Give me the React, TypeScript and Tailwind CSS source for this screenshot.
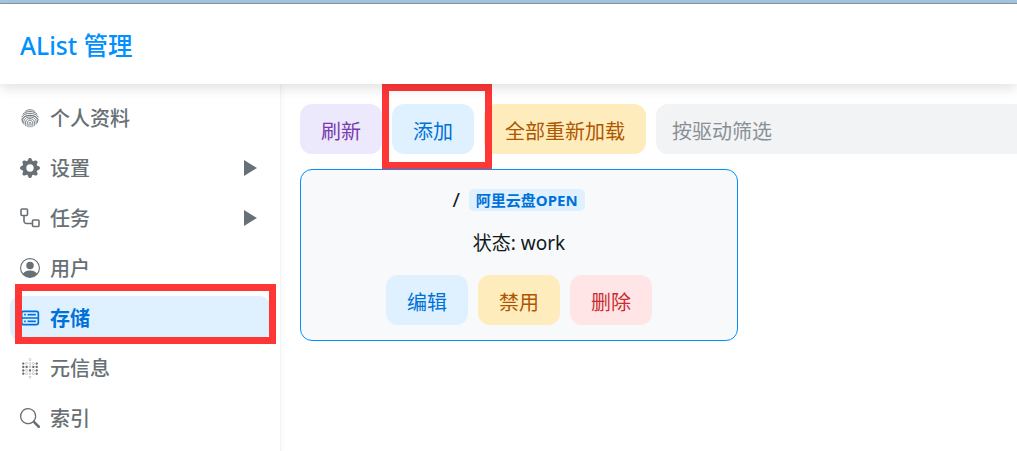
import React from 'react';
import { BsGearFill, BsPersonCircle, BsSearch } from 'react-icons/bs';
import { SiMetabase } from 'react-icons/si';
import { CgDatabase } from 'react-icons/cg';

const FingerprintIcon = () => (
  <svg width="20" height="20" viewBox="0 0 20 20" fill="none" stroke="currentColor" strokeWidth="0.9" strokeLinecap="round">
    <path d="M5.5 3.2C8.2 1.2 11.8 1.2 14.5 3.2" />
    <path d="M3 6C6 2.6 14 2.6 17 6" />
    <path d="M1.8 9C3.8 4 16.2 4 18.2 9" />
    <path d="M1.6 12C2.4 5.6 17.6 5.6 18.4 12" />
    <path d="M2.4 14.5C2 13 2.8 7.4 10 7.4C17.2 7.4 18 13 17.6 14.5" />
    <path d="M3.8 16C3.4 13 4.4 9 10 9C15.6 9 16.6 13 16.2 16" />
    <path d="M5.4 17.4C5 14 6 10.6 10 10.6C14 10.6 15 14 14.6 17.4" />
    <path d="M7.2 18.4C6.8 15 7.6 12.2 10 12.2C12.4 12.2 13.2 15 12.8 18.4" />
    <path d="M9 18.9C8.8 16.4 9 14 10 14C11 14 11.2 16.4 11 18.9" />
  </svg>
);

const TaskIcon = () => (
  <svg width="20" height="20" viewBox="0 0 20 20" fill="none" stroke="currentColor" strokeWidth="1.6">
    <rect x="1" y="1" width="6.5" height="6.5" rx="1" />
    <rect x="12.5" y="12" width="6.5" height="6.5" rx="1" />
    <path d="M4 7.5V13a2.5 2.5 0 0 0 2.5 2.5h6" />
  </svg>
);

const menu = [
  { label: '个人资料', icon: <FingerprintIcon /> },
  { label: '设置', icon: <BsGearFill size={20} />, arrow: true },
  { label: '任务', icon: <TaskIcon />, arrow: true },
  { label: '用户', icon: <BsPersonCircle size={20} /> },
  { label: '存储', icon: <CgDatabase size={22} />, active: true },
  { label: '元信息', icon: <SiMetabase size={21} /> },
  { label: '索引', icon: <BsSearch size={20} /> },
];

const Btn = ({ className, children }: { className: string; children: React.ReactNode }) => (
  <button className={`h-[50px] px-[21px] pt-[6px] rounded-[12px] text-[20px] leading-none ${className}`}>{children}</button>
);

const App: React.FC = () => {
  return (
    <div
      className="relative h-screen overflow-hidden bg-white text-[#11181c]"
      style={{ fontFamily: '"Noto Sans", "Noto Sans CJK SC", sans-serif' }}
    >
      <div className="h-[4px] bg-[#a9c4dc] border-b border-[#7f99ae]" />

      {/* Header */}
      <header className="relative z-10 h-[80px] flex items-center pl-[20px] pt-[5px] bg-white shadow-[0_4px_12px_rgba(0,0,0,0.12)]">
        <h1 className="text-[24.5px] font-medium text-[#0091ff]">AList 管理</h1>
      </header>

      <div className="flex h-[367px]">
        {/* Sidebar */}
        <aside className="w-[281px] shrink-0 pt-[12px] px-[10px] border-r border-[#f1f3f5] shadow-[1px_0_4px_rgba(0,0,0,0.04)]">
          {menu.map((item) => (
            <div
              key={item.label}
              className={`h-[44px] mb-[6px] w-[260px] flex items-center rounded-[10px] pl-[10px] pr-[13px] ${
                item.active ? 'bg-[#dff0ff] text-[#0070d9]' : 'text-[#687076]'
              }`}
            >
              <span className="w-[20px] h-[22px] flex items-center justify-center shrink-0">{item.icon}</span>
              <span className={`ml-[10px] pt-[2px] text-[20px] flex-1 ${item.active ? 'font-bold' : 'font-medium'}`}>{item.label}</span>
              {item.arrow && <span className="w-0 h-0 border-y-[8px] border-y-transparent border-l-[13px] border-l-[#687076]" />}
            </div>
          ))}
        </aside>

        {/* Main */}
        <main className="flex-1 min-w-0 pt-[20px] pl-[19px]">
          <div className="flex gap-[10px]">
            <Btn className="bg-[#ede9fd] text-[#793aaf]">刷新</Btn>
            <Btn className="bg-[#dff0ff] text-[#0070d9]">添加</Btn>
            <Btn className="bg-[#ffecbc] text-[#ad5700] whitespace-nowrap">全部重新加载</Btn>
            <div className="flex-1 h-[50px] rounded-l-[12px] bg-[#f1f3f5] pl-[16px] pt-[6px] flex items-center text-[20px] text-[#889096] whitespace-nowrap">
              按驱动筛选
            </div>
          </div>

          <div className="mt-[15px] w-[438px] h-[172px] rounded-[12px] border border-[#0091ff] bg-[#f8f9fa] flex flex-col items-center pt-[19px]">
            <div className="h-[22px] flex items-center gap-[9px] pr-[1px]">
              <span className="text-[20px] leading-none">/</span>
              <span className="h-[22px] px-[7px] rounded-[5px] bg-[#dff0ff] text-[#0070d9] text-[15px] font-bold flex items-center">阿里云盘OPEN</span>
            </div>
            <div className="mt-[19px] h-[26px] flex items-center text-[19px]">状态: work</div>
            <div className="mt-[19px] flex gap-[10px]">
              <Btn className="bg-[#dff0ff] text-[#0070d9]">编辑</Btn>
              <Btn className="bg-[#ffecbc] text-[#ad5700]">禁用</Btn>
              <Btn className="bg-[#ffe5e5] text-[#cd2b31]">删除</Btn>
            </div>
          </div>
        </main>
      </div>

      {/* Red annotation frames drawn over the screenshot */}
      <div className="absolute left-[15px] top-[284px] w-[261px] h-[60px] border-[7px] border-[#ff3636]" />
      <div className="absolute left-[382px] top-[84px] w-[110px] h-[85px] border-[7px] border-[#ff3636]" />
    </div>
  );
};

export default App;
